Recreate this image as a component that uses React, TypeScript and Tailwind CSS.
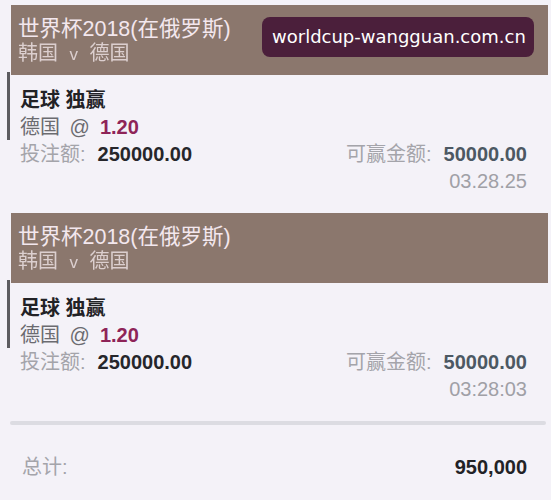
import React from "react";

type Bet = {
  time: string;
};

const cjk = '"Liberation Sans", "Noto Sans CJK SC", sans-serif';

function BetCard({ bet, badge }: { bet: Bet; badge?: boolean }) {
  return (
    <div className="relative">
      <div
        className="relative ml-[11px] mr-[3px] h-[70px] bg-[#8b776d] pl-[7px] pt-[12px]"
        style={{ fontFamily: cjk }}
      >
        <div className="text-[21.5px] leading-[25px] text-[#f3e7ee]">世界杯2018(在俄罗斯)</div>
        <div className="text-[20px] leading-[22px] text-[#dccfcf] blur-[0.4px]">
          韩国 <span className="mx-[6px] text-[17px]">v</span> 德国
        </div>
        {badge && (
          <div className="absolute left-[251px] top-[12px] flex h-[40px] w-[272px] items-center rounded-[8px] bg-[#4b1f3b] pl-[10px]">
            <span
              className="text-[18px] leading-none text-white"
              style={{ fontFamily: '"DejaVu Sans", sans-serif' }}
            >
              worldcup-wangguan.com.cn
            </span>
          </div>
        )}
      </div>
      <div className="relative pl-[20px] pr-[24px] pt-[12px]" style={{ fontFamily: cjk }}>
        <div className="absolute left-[7px] top-[-3px] h-[68px] w-[3px] bg-[#5c5c60]" />
        <div className="h-[27px] text-[20px] font-bold leading-[27px] text-[#222226]">
          足球 独赢
        </div>
        <div className="h-[27px] text-[20px] leading-[27px] text-[#6b6b70]">
          德国 <span className="ml-[4px]">@</span>
          <span className="ml-[10px] font-bold text-[#8e2458]">1.20</span>
        </div>
        <div className="flex h-[27px] items-center justify-between text-[20px] leading-[27px]">
          <div>
            <span className="text-[#a4a4aa]">投注额:</span>
            <span className="ml-[12px] font-bold text-[#26262b]">250000.00</span>
          </div>
          <div>
            <span className="text-[#a4a4aa]">可赢金额:</span>
            <span className="ml-[12px] font-bold text-[#4c5863]">50000.00</span>
          </div>
        </div>
        <div className="h-[27px] text-right text-[20px] leading-[27px] text-[#a0a0a6]">
          {bet.time}
        </div>
      </div>
    </div>
  );
}

export default function App() {
  return (
    <div className="h-[500px] w-[551px] overflow-hidden bg-[#f4f2f8] pt-[5px]">
      <BetCard bet={{ time: "03.28.25" }} badge />
      <div className="h-[18px]" />
      <BetCard bet={{ time: "03:28:03" }} />
      <div className="ml-[10px] mr-[5px] mt-[18px] h-[4px] rounded-full bg-[#dcdce2]" />
      <div
        className="mt-[29px] flex h-[27px] items-center justify-between pl-[22px] pr-[24px] text-[20px] leading-[27px]"
        style={{ fontFamily: cjk }}
      >
        <span className="text-[#a4a4aa]">总计:</span>
        <span className="font-bold text-[#222226]">950,000</span>
      </div>
    </div>
  );
}
